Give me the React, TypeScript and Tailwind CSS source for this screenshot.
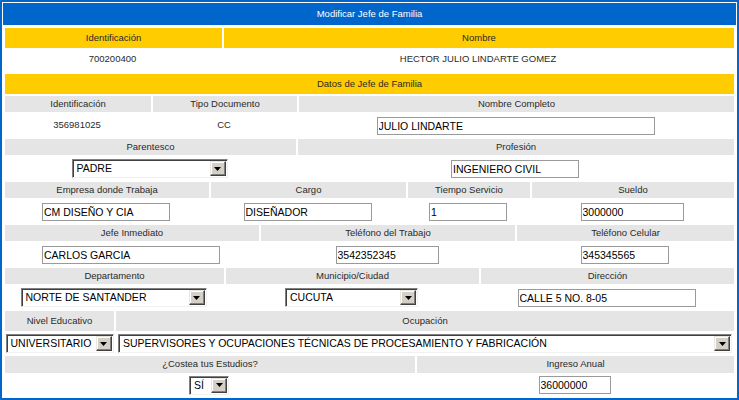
import React from 'react'

// Ficha "Modificar Jefe de Familia" – formulario clásico en tablas

const Arrow = () => (
  <svg width="7" height="4" viewBox="0 0 7 4">
    <path d="M0 0h7L3.5 4z" fill="#000" />
  </svg>
)

const Select: React.FC<{ value: string; w: string }> = ({ value, w }) => (
  <div
    className={`${w} h-[19px] flex bg-white border border-t-[#808080] border-l-[#808080] border-r-[#f0f0f0] border-b-[#f0f0f0] shadow-[inset_1px_1px_0_#404040]`}
  >
    <span className="flex-1 pl-[4px] text-[10.5px] leading-[17px] text-black text-left whitespace-nowrap overflow-hidden">
      {value}
    </span>
    <span className="w-[16px] my-px mr-px flex items-center justify-center bg-[#d4d0c8] border border-t-[#e8e6e0] border-l-[#e8e6e0] border-r-[#404040] border-b-[#404040] shadow-[inset_-1px_-1px_0_#808080,inset_1px_1px_0_#fff]">
      <Arrow />
    </span>
  </div>
)

const Input: React.FC<{ value: string; w: string }> = ({ value, w }) => (
  <input
    readOnly
    value={value}
    className={`${w} h-[18px] border border-[#9a9a9a] bg-white px-[1px] text-[10.5px] leading-[16px] text-black outline-none`}
  />
)

const Label: React.FC<{ w?: string; children: React.ReactNode }> = ({ w = 'flex-1', children }) => (
  <div className={`${w} bg-[#e5e5e5] flex items-center justify-center`}>{children}</div>
)

const Value: React.FC<{ w?: string; children?: React.ReactNode }> = ({ w = 'flex-1', children }) => (
  <div className={`${w} bg-white flex items-center justify-center pr-[2px]`}>{children}</div>
)

export default function App() {
  return (
    <div className="w-[739px] h-[400px] border-2 border-[#0066cc] p-px bg-white font-['Liberation_Sans',Arial,sans-serif] text-[9.5px] text-[#2a2a2a]">
      <div className="h-[22px] bg-[#0066cc] text-white flex items-center justify-center">
        Modificar Jefe de Familia
      </div>

      <div className="px-[2px] pt-[3px] flex flex-col gap-[2px]">
        {/* Jefe actual */}
        <div className="flex gap-[2px] h-[20px]">
          <div className="w-[217px] bg-[#ffcc00] flex items-center justify-center">Identificación</div>
          <div className="flex-1 bg-[#ffcc00] flex items-center justify-center">Nombre</div>
        </div>
        <div className="flex gap-[2px] h-[22px] pb-[4px]">
          <Value w="w-[217px]">700200400</Value>
          <Value>HECTOR JULIO LINDARTE GOMEZ</Value>
        </div>

        <div className="h-[20px] bg-[#ffcc00] flex items-center justify-center">Datos de Jefe de Familia</div>

        {/* Identificación */}
        <div className="flex gap-[2px] h-[16px]">
          <Label w="w-[146px]">Identificación</Label>
          <Label w="w-[144px]">Tipo Documento</Label>
          <Label>Nombre Completo</Label>
        </div>
        <div className="flex gap-[2px] h-[23px]">
          <Value w="w-[146px]">356981025</Value>
          <Value w="w-[144px]">CC</Value>
          <Value>
            <Input w="w-[278px]" value="JULIO LINDARTE" />
          </Value>
        </div>

        {/* Parentesco */}
        <div className="flex gap-[2px] h-[16px]">
          <Label w="w-[291px]">Parentesco</Label>
          <Label>Profesión</Label>
        </div>
        <div className="flex gap-[2px] h-[23px]">
          <Value w="w-[291px]">
            <Select w="w-[156px]" value="PADRE" />
          </Value>
          <Value>
            <Input w="w-[128px]" value="INGENIERO CIVIL" />
          </Value>
        </div>

        {/* Trabajo */}
        <div className="flex gap-[2px] h-[16px]">
          <Label w="w-[204px]">Empresa donde Trabaja</Label>
          <Label w="w-[195px]">Cargo</Label>
          <Label w="w-[122px]">Tiempo Servicio</Label>
          <Label>Sueldo</Label>
        </div>
        <div className="flex gap-[2px] h-[23px]">
          <Value w="w-[204px]">
            <Input w="w-[128px]" value="CM DISEÑO Y CIA" />
          </Value>
          <Value w="w-[195px]">
            <Input w="w-[128px]" value="DISEÑADOR" />
          </Value>
          <Value w="w-[122px]">
            <Input w="w-[78px]" value="1" />
          </Value>
          <Value>
            <Input w="w-[103px]" value="3000000" />
          </Value>
        </div>

        {/* Contacto laboral */}
        <div className="flex gap-[2px] h-[16px]">
          <Label w="w-[254px]">Jefe Inmediato</Label>
          <Label w="w-[254px]">Teléfono del Trabajo</Label>
          <Label>Teléfono Celular</Label>
        </div>
        <div className="flex gap-[2px] h-[23px]">
          <Value w="w-[254px]">
            <Input w="w-[178px]" value="CARLOS GARCIA" />
          </Value>
          <Value w="w-[254px]">
            <Input w="w-[103px]" value="3542352345" />
          </Value>
          <Value>
            <Input w="w-[88px]" value="345345565" />
          </Value>
        </div>

        {/* Ubicación */}
        <div className="flex gap-[2px] h-[16px]">
          <Label w="w-[219px]">Departamento</Label>
          <Label w="w-[253px]">Municipio/Ciudad</Label>
          <Label>Dirección</Label>
        </div>
        <div className="flex gap-[2px] h-[23px]">
          <Value w="w-[219px]">
            <Select w="w-[186px]" value="NORTE DE SANTANDER" />
          </Value>
          <Value w="w-[253px]">
            <Select w="w-[133px]" value="CUCUTA" />
          </Value>
          <Value>
            <Input w="w-[178px]" value="CALLE 5 NO. 8-05" />
          </Value>
        </div>

        {/* Educación */}
        <div className="flex gap-[2px] h-[20px]">
          <Label w="w-[109px]">Nivel Educativo</Label>
          <Label>Ocupación</Label>
        </div>
        <div className="flex gap-[2px] h-[21px]">
          <div className="w-[109px] bg-white flex items-center justify-center">
            <Select w="w-[108px]" value="UNIVERSITARIO" />
          </div>
          <div className="flex-1 bg-white flex items-center justify-center">
            <Select w="w-[614px]" value="SUPERVISORES Y OCUPACIONES TÉCNICAS DE PROCESAMIENTO Y FABRICACIÓN" />
          </div>
        </div>

        {/* Ingresos */}
        <div className="flex gap-[2px] h-[17px]">
          <Label w="w-[410px]">¿Costea tus Estudios?</Label>
          <Label>Ingreso Anual</Label>
        </div>
        <div className="flex gap-[2px] h-[20px]">
          <Value w="w-[410px]">
            <Select w="w-[40px]" value="SÍ" />
          </Value>
          <Value>
            <Input w="w-[72px]" value="36000000" />
          </Value>
        </div>
      </div>
    </div>
  )
}
